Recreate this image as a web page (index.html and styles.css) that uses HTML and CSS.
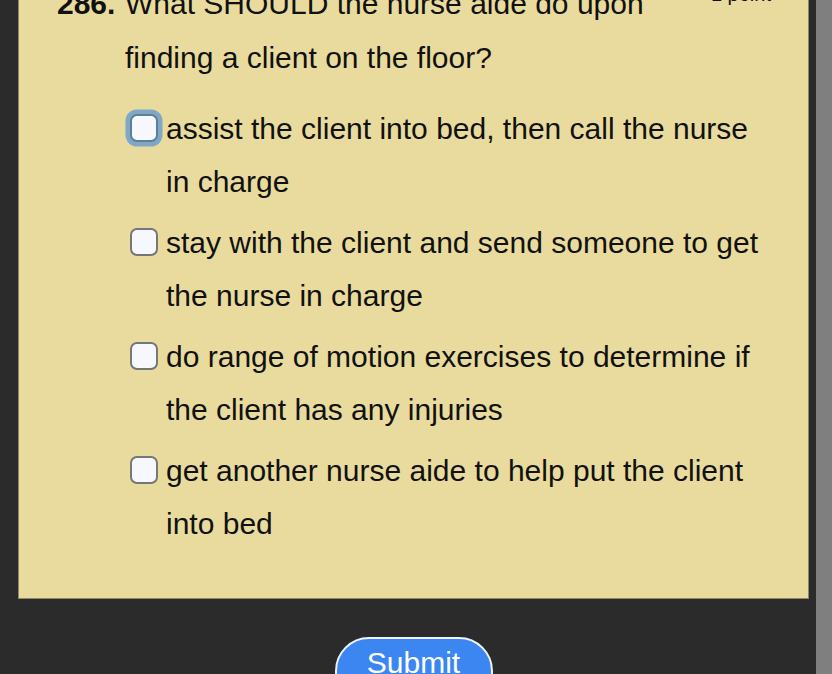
FILE: index.html
```html
<!DOCTYPE html>
<html lang="en">
<head>
    <meta charset="UTF-8">
    <meta name="viewport" content="width=device-width, initial-scale=1.0">
    <title>Nurse Aide Practice Test</title>
    <link rel="stylesheet" href="styles.css">
</head>
<body>
    <div class="screen">
        <main class="page">
            <form class="quiz" onsubmit="return false;">
                <!-- question card -->
                <section class="question-card">
                    <div class="question-head">
                        <span class="q-number">286.</span>
                        <p class="q-text">What SHOULD the nurse aide do upon finding a client on the floor?</p>
                        <span class="q-points">1 point</span>
                    </div>

                    <ul class="choices">
                        <li>
                            <label class="choice">
                                <input type="checkbox" class="choice-box is-focused" name="q286">
                                <span class="choice-text">assist the client into bed, then call the nurse in charge</span>
                            </label>
                        </li>
                        <li>
                            <label class="choice">
                                <input type="checkbox" class="choice-box" name="q286">
                                <span class="choice-text">stay with the client and send someone to get the nurse in charge</span>
                            </label>
                        </li>
                        <li>
                            <label class="choice">
                                <input type="checkbox" class="choice-box" name="q286">
                                <span class="choice-text">do range of motion exercises to determine if the client has any injuries</span>
                            </label>
                        </li>
                        <li>
                            <label class="choice">
                                <input type="checkbox" class="choice-box" name="q286">
                                <span class="choice-text">get another nurse aide to help put the client into bed</span>
                            </label>
                        </li>
                    </ul>
                </section>

                <div class="actions">
                    <button type="submit" class="submit-btn">Submit</button>
                </div>
            </form>
        </main>

        <!-- scrollbar strip on the right -->
        <div class="scroll-strip"></div>
    </div>
</body>
</html>
```

FILE: styles.css
```css
/* global */
body {
    margin: 0;
    padding: 0;
    background: #2b2b2b;
    font-family: "Liberation Sans", Arial, sans-serif;
    color: #111;
    height: 100vh;
    overflow: hidden;
}

.screen {
    display: flex;
    height: 100vh;
}

.page {
    width: 816px;
    flex-shrink: 0;
}

.scroll-strip {
    flex: 1;
    background: #7f7f7f;
}

/* question card */
.question-card {
    margin: -40px 0 0 18px;
    width: 791px;
    box-sizing: border-box;
    padding: 16px 37px 48px 38px;
    background: #e9db9d;
    border: 1px solid #8f8766;
}

.question-head {
    display: flex;
    align-items: flex-start;
    font-size: 30px;
    line-height: 54px;
}

.q-number {
    width: 68px;
    flex-shrink: 0;
    font-weight: bold;
}

.q-text {
    flex: 1;
    margin: 0;
}

.q-points {
    margin-top: 7px;
    font-size: 20px;
    line-height: 20px;
    white-space: nowrap;
}

/* answer list */
.choices {
    list-style: none;
    margin: 17px 0 0 73px;
    padding: 0;
    display: flex;
    flex-direction: column;
    gap: 8px;
}

.choice {
    display: flex;
    align-items: flex-start;
    gap: 8px;
    font-size: 30px;
    line-height: 53px;
    cursor: pointer;
}

.choice-box {
    appearance: none;
    -webkit-appearance: none;
    flex-shrink: 0;
    width: 28px;
    height: 28px;
    margin: 12px 0 0 0;
    box-sizing: border-box;
    border: 2.5px solid #767676;
    border-radius: 7px;
    background: #f6f7ff;
}

.choice-box.is-focused {
    border-color: #5f7f98;
    box-shadow: 0 0 0 4.5px #7fa8c6;
}

/* submit */
.actions {
    margin: 38px 0 0 18px;
    width: 791px;
    display: flex;
    justify-content: center;
    align-items: flex-start;
}

.submit-btn {
    width: 158px;
    padding: 7px 0 24px 0;
    font-family: inherit;
    font-size: 30px;
    line-height: 34px;
    color: #fff;
    background: #3b86f1;
    border: 2px solid #eef2fb;
    border-radius: 34px;
    text-align: center;
}
```
